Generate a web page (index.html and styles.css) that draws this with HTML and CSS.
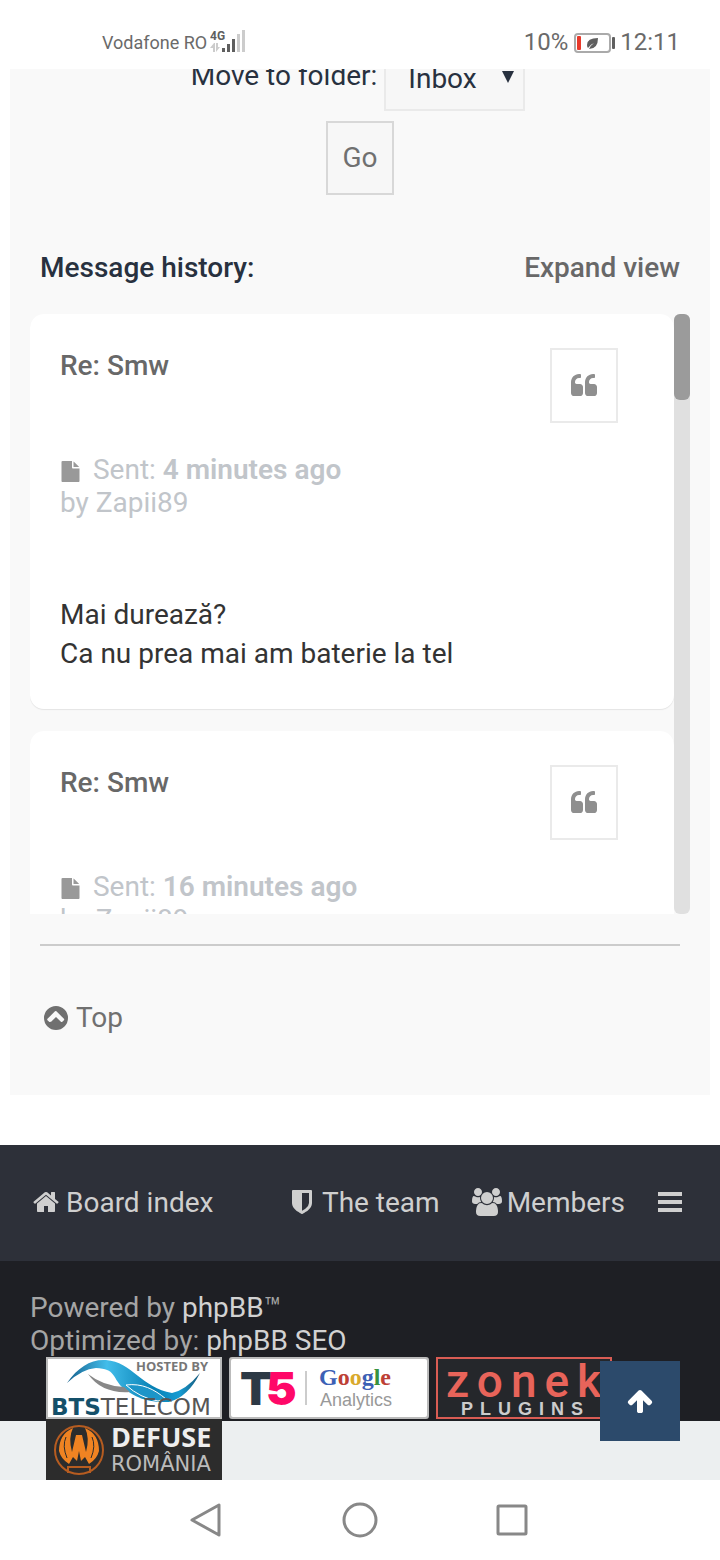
FILE: index.html
```html
<!DOCTYPE html>
<html lang="en">
<head>
    <meta charset="UTF-8">
    <meta name="viewport" content="width=device-width, initial-scale=1.0">
    <title>Message history</title>
    <link rel="stylesheet" href="styles.css">
</head>
<body>
<!-- Icons -->
<svg class="sprite" aria-hidden="true">
    <symbol id="quote" viewBox="0 0 1792 1792">
        <path id="quote-mark" d="M832 960v384q0 80-56 136t-136 56h-384q-80 0-136-56t-56-136v-704q0-104 40.5-198.5t109.5-163.5 163.5-109.5 198.5-40.5h64q26 0 45 19t19 45v128q0 26-19 45t-45 19h-64q-106 0-181 75t-75 181v32q0 40 28 68t68 28h224q80 0 136 56t56 136z"/>
        <use href="#quote-mark" x="896"/>
    </symbol>
    <symbol id="file" viewBox="0 0 1792 1792">
        <path d="M1152 512v-472q22 14 36 28l408 408q14 14 28 36h-472zm-128 32q0 40 28 68t68 28h544v1056q0 40-28 68t-68 28h-1344q-40 0-68-28t-28-68v-1600q0-40 28-68t68-28h800v544z"/>
    </symbol>
</svg>

<div class="status-bar">
    <span class="carrier">Vodafone RO</span>
    <svg class="signal" width="36" height="24" viewBox="0 0 36 24">
        <text x="0" y="11" class="signal-type">4G</text>
        <path fill="#ccc" d="M4 14l-4 5h3v4h2v-9zM6 14h2v4h2l-4 5z"/>
        <path fill="#5f5f5f" d="M12 19h3v4h-3zM17 15h3v8h-3zM22 10h3v13h-3z"/>
        <path fill="#ccc" d="M27 5h3v18h-3zM32 1h3v22h-3z"/>
    </svg>
    <span class="battery-level">10%</span>
    <svg width="42" height="20" viewBox="0 0 42 20">
        <rect x="1" y="1" width="35" height="18" rx="3" fill="none" stroke="#aaa" stroke-width="2"/>
        <rect x="3" y="3" width="4" height="14" rx="1" fill="#e8392b"/>
        <path fill="#5f5f5f" d="M24 5q-11 0-11 7 0 2 1 3 3-4 6-5-3 2-5 6 9 0 9-11z"/>
        <rect x="38" y="4" width="3" height="12" rx="1" fill="#5f5f5f"/>
    </svg>
    <span class="clock">12:11</span>
</div>

<div class="page">
    <div class="panel">
        <form class="move-form">
            <div class="move-row">
                <label for="folder">Move to folder:</label>
                <div class="select-wrap">
                    <select id="folder">
                        <option>Inbox</option>
                    </select>
                    <svg class="arrow" width="12" height="12" viewBox="0 0 12 12"><path d="M0 0h12L6 12z"/></svg>
                </div>
            </div>
            <button type="button" class="btn go-btn">Go</button>
        </form>

        <div class="history-head">
            <h3>Message history:</h3>
            <a href="#" class="expand">Expand view</a>
        </div>

        <!-- Message history -->
        <div class="history">
            <div class="posts">
                <div class="post">
                    <div class="post-head">
                        <h3><a href="#">Re: Smw</a></h3>
                        <button type="button" class="btn quote-btn" aria-label="Quote"><svg class="icon"><use href="#quote"/></svg></button>
                    </div>
                    <p class="author">
                        <svg class="icon-file"><use href="#file"/></svg> Sent: <strong>4 minutes ago</strong><br>by Zapii89
                    </p>
                    <div class="content">Mai durează?<br>Ca nu prea mai am baterie la tel</div>
                </div>
                <div class="post">
                    <div class="post-head">
                        <h3><a href="#">Re: Smw</a></h3>
                        <button type="button" class="btn quote-btn" aria-label="Quote"><svg class="icon"><use href="#quote"/></svg></button>
                    </div>
                    <p class="author">
                        <svg class="icon-file"><use href="#file"/></svg> Sent: <strong>16 minutes ago</strong><br>by Zapii89
                    </p>
                </div>
            </div>
            <div class="track"><div class="thumb"></div></div>
        </div>

        <hr>
        <a href="#" class="top-link">
            <svg class="icon" viewBox="0 0 1792 1792"><path fill-rule="evenodd" d="M128 896a768 768 0 1 0 1536 0a768 768 0 1 0-1536 0zM582 1139l314-314 314 314q19 19 45 19t45-19l102-102q19-19 19-45t-19-45l-480-480q-19-19-45-19t-45 19l-480 480q-19 19-19 45t19 45l102 102q19 19 45 19t45-19z"/></svg>
            Top
        </a>
    </div>

    <!-- Footer -->
    <div class="footer-nav">
        <a href="#" class="home">
            <svg class="icon" viewBox="0 0 1792 1792"><path d="M1472 992v480q0 26-19 45t-45 19h-384v-384h-256v384h-384q-26 0-45-19t-19-45v-480q0-1 .5-3t.5-3l575-474 575 474q1 2 1 6zm223-69l-62 74q-8 9-21 11h-3q-13 0-21-7l-692-577-692 577q-12 8-24 7-13-2-21-11l-62-74q-8-10-7-23.5t11-21.5l719-599q32-26 76-26t76 26l244 204v-195q0-14 9-23t23-9h192q14 0 23 9t9 23v408l219 182q10 8 11 21.5t-7 23.5z"/></svg>
            Board index
        </a>
        <a href="#">
            <svg class="icon" viewBox="0 0 1792 1792"><path d="M1344 960v-640h-448v1137q119-63 213-137 235-184 235-360zm192-768v768q0 86-33.5 170.5t-83 150-118 127.5-126.5 103-121 77.5-89.5 49.5-42.5 20q-12 6-26 6t-26-6q-16-7-42.5-20t-89.5-49.5-121-77.5-126.5-103-118-127.5-83-150-33.5-170.5v-768q0-26 19-45t45-19h1152q26 0 45 19t19 45z"/></svg>
            The team
        </a>
        <a href="#" class="members">
            <svg class="icon icon-wide" viewBox="0 0 1920 1792"><path d="M593 896q-162 5-265 128h-134q-82 0-138-40.5t-56-118.5q0-353 124-353 6 0 43.5 21t97.5 42.5 119 21.5q67 0 133-23-5 37-5 66 0 139 81 256zm1071 637q0 120-73 189.5t-194 69.5h-874q-121 0-194-69.5t-73-189.5q0-53 3.5-103.5t14-109 26.5-108.5 43-97.5 62-81 85.5-53.5 111.5-20q10 0 43 21.5t73 48 107 48 135 21.5 135-21.5 107-48 73-48 43-21.5q61 0 111.5 20t85.5 53.5 62 81 43 97.5 26.5 108.5 14 109 3.5 103.5zm-1024-1277q0 106-75 181t-181 75-181-75-75-181 75-181 181-75 181 75 75 181zm704 384q0 159-112.5 271.5t-271.5 112.5-271.5-112.5-112.5-271.5 112.5-271.5 271.5-112.5 271.5 112.5 112.5 271.5zm576 225q0 78-56 118.5t-138 40.5h-134q-103-123-265-128 81-117 81-256 0-29-5-66 66 23 133 23 59 0 119-21.5t97.5-42.5 43.5-21q124 0 124 353zm-128-609q0 106-75 181t-181 75-181-75-75-181 75-181 181-75 181 75 75 181z"/></svg>
            Members
        </a>
        <button type="button" class="menu-btn" aria-label="Menu">
            <svg width="24" height="20" viewBox="0 0 24 20"><path d="M0 0h24v4H0zM0 8h24v4H0zM0 16h24v4H0z"/></svg>
        </button>
    </div>

    <div class="copyright">
        Powered by <a href="#">phpBB</a>™<br>
        Optimized by: <a href="#">phpBB SEO</a>
        <div class="badges">
            <a href="#" aria-label="Hosted by BTS Telecom">
                <svg width="176" height="62" viewBox="0 0 176 62">
                    <defs>
                        <linearGradient id="wave" x1="0" x2="1">
                            <stop offset="0" stop-color="#17628f"/>
                            <stop offset="0.3" stop-color="#42bdea"/>
                            <stop offset="0.65" stop-color="#0781b5"/>
                            <stop offset="0.85" stop-color="#159bd2"/>
                            <stop offset="1" stop-color="#185777"/>
                        </linearGradient>
                    </defs>
                    <rect x="1" y="1" width="174" height="60" fill="#fff" stroke="#bbb" stroke-width="2"/>
                    <path fill="url(#wave)" d="M21 26C32 10 45 2 60 3c26 2 36 28 66 33q14-3 28-20-12 24-31 29C98 46 86 38 76 30 66 20 70 12 50 11Q36 12 21 26z"/>
                    <path fill="#1c95c8" stroke="#fff" d="M80 28c16-2 28 4 40 14l-8 2q-18-3-32-16z"/>
                    <path fill="#888" d="M42 17q15 12 36 13l6 5Q56 37 42 17z"/>
                    <text x="90" y="14" class="bts-host">HOSTED BY</text>
                    <text x="5" y="58" class="bts-name"><tspan class="bts-bold">BTS</tspan>TELECOM</text>
                </svg>
            </a>
            <a href="#" aria-label="T5 Google Analytics">
                <svg width="200" height="62" viewBox="0 0 200 62">
                    <rect width="200" height="62" rx="3" fill="#bbb"/>
                    <rect x="2" y="2" width="196" height="58" rx="2" fill="#fff"/>
                    <text x="11" y="48" class="t5">T</text>
                    <text x="37" y="48" class="t5 pink">5</text>
                    <path stroke="#ccc" stroke-width="2" d="M77 14v34"/>
                    <text x="90" y="28" class="google"><tspan fill="#3c60b5">G</tspan><tspan fill="#bd4035">o</tspan><tspan fill="#d9a92c">o</tspan><tspan fill="#3c60b5">g</tspan><tspan fill="#39923e">l</tspan><tspan fill="#bd4035">e</tspan></text>
                    <text x="91" y="49" class="analytics">Analytics</text>
                </svg>
            </a>
            <a href="#" aria-label="Zonek plugins">
                <svg width="176" height="62" viewBox="0 0 176 62">
                    <rect x="1" y="1" width="174" height="60" fill="#25272b" stroke="#d95c54" stroke-width="2"/>
                    <text x="10" y="40" class="zonek">zonek</text>
                    <text x="25" y="58" class="plugins">PLUGINS</text>
                </svg>
            </a>
        </div>
        <div class="badges overhang">
            <a href="#" aria-label="Defuse Romania">
                <svg width="176" height="62" viewBox="0 0 176 62">
                    <rect width="176" height="62" fill="#2c2c2c"/>
                    <circle cx="33" cy="31" r="24" fill="none" stroke="#b65c20" stroke-width="2"/>
                    <path fill="#f08322" d="M27 9Q13 15 13 32q2 8 10 13l4-7 4 4 2-10 2 10 4-4 4 7q8-5 10-13Q53 15 39 9q5 10 1 24l-4-17h-6l-4 17q-4-14 1-24z"/>
                    <path stroke="#2c2c2c" stroke-width="1" fill="none" d="M20 18q-4 9 1 21M46 18q4 9-1 21"/>
                    <path stroke="#b65c20" stroke-width="2" fill="none" d="M22 54v-6h22v6"/>
                    <text x="65" y="28" class="defuse">DEFUSE</text>
                    <text x="65" y="52" class="romania">ROMÂNIA</text>
                </svg>
            </a>
        </div>
    </div>
    <button type="button" class="to-top" aria-label="Back to top">
        <svg class="icon" viewBox="0 0 1792 1792"><path d="M1675 971q0 51-37 90l-75 75q-38 38-91 38-54 0-90-38l-294-293v704q0 52-37.5 84.5t-90.5 32.5h-128q-53 0-90.5-32.5t-37.5-84.5v-704l-294 293q-36 38-90 38t-90-38l-75-75q-38-38-38-90 0-53 38-91l651-651q35-37 90-37 54 0 91 37l651 651q37 39 37 91z"/></svg>
    </button>
</div>

<div class="system-nav">
    <button type="button" aria-label="Back"><svg width="36" height="36" viewBox="0 0 36 36"><path d="M29 3v30L2 18z"/></svg></button>
    <button type="button" aria-label="Home"><svg width="36" height="36" viewBox="0 0 36 36"><circle cx="18" cy="18" r="16"/></svg></button>
    <button type="button" aria-label="Recent apps"><svg width="36" height="36" viewBox="0 0 36 36"><rect x="4" y="4" width="28" height="28" rx="1"/></svg></button>
</div>
</body>
</html>
```
FILE: styles.css
```css
* {
    box-sizing: border-box;
}

body {
    font-family: Roboto, 'Liberation Sans', sans-serif;
    font-size: 28px;
    line-height: 33px;
    color: #28313f;
    background-color: #fff;
    margin: 0;
    height: 100vh;
    display: flex;
    flex-direction: column;
}

a {
    color: inherit;
    text-decoration: none;
}

h3 {
    font-size: 28px;
    font-weight: 500;
    margin: 0;
}

button,
select {
    font: inherit;
    color: inherit;
    cursor: pointer;
}

svg {
    display: block;
    fill: currentColor;
    flex-shrink: 0;
}

.sprite {
    display: none;
}

.icon {
    width: 28px;
    height: 28px;
}

.icon-wide {
    width: 30px;
}

/* Status bar */
.status-bar {
    display: flex;
    align-items: center;
    height: 69px;
    padding: 16px 40px 0 102px;
    font-size: 24px;
    color: #6a6a6a;
    flex-shrink: 0;
}

.carrier {
    font-size: 18px;
    margin-right: 3px;
}

.signal {
    align-self: flex-start;
    margin-top: 13px;
}

.signal-type {
    font-size: 12px;
    font-weight: 700;
    fill: #5f5f5f;
}

.battery-level {
    margin: 0 6px 0 auto;
}

.clock {
    margin-left: 4px;
}

/* Page */
.page {
    position: relative;
    flex: 1;
    min-height: 0;
    overflow: hidden;
    background-color: #eceff0;
}

.panel {
    background-color: #f9f9f9;
    border: solid #fff;
    border-width: 0 10px 50px;
    padding: 0 20px 61px;
}

.move-form {
    display: flex;
    flex-direction: column;
    align-items: center;
    gap: 10px;
    margin-top: -22px;
}

.move-row {
    display: flex;
    gap: 7px;
    line-height: 58px;
    padding-right: 4px;
}

.select-wrap {
    position: relative;
}

select {
    display: block;
    appearance: none;
    width: 141px;
    height: 64px;
    padding: 0 22px;
    border: 2px solid #eaeaea;
    border-radius: 0;
    background-color: #f7f7f7;
}

.arrow {
    position: absolute;
    right: 11px;
    top: 24px;
    pointer-events: none;
}

.btn {
    display: flex;
    align-items: center;
    justify-content: center;
    width: 68px;
    height: 74px;
    padding: 0;
    border: 2px solid #d8d8d8;
    background-color: #f7f7f7;
    color: #707070;
}

.go-btn {
    padding-bottom: 2px;
}

.history-head {
    display: flex;
    justify-content: space-between;
    margin: 56px 10px 30px;
}

.expand {
    font-weight: 500;
    color: #686868;
}

.history {
    display: flex;
    height: 600px;
}

.posts {
    flex: 1;
    overflow: hidden;
}

.track {
    width: 16px;
    border-radius: 6px;
    background-color: #e0e0e0;
}

.thumb {
    height: 86px;
    border-radius: 6px;
    background-color: #9b9b9b;
}

.post {
    background-color: #fff;
    border-radius: 14px;
    box-shadow: 0 1px 1px #e4e4e4;
    padding: 34px 30px 36px;
    margin-bottom: 22px;
}

.post-head {
    display: flex;
    justify-content: space-between;
    padding-right: 26px;
    line-height: 35px;
    color: #686868;
}

.quote-btn {
    height: 75px;
    border-color: #eaeaea;
    background-color: #fff;
    color: #8f8f8f;
}

.author {
    margin: 30px 0 76px;
    color: #c1c5ca;
}

.author strong {
    font-weight: 600;
}

.icon-file {
    display: inline-block;
    width: 21px;
    height: 21px;
    margin-right: 5px;
    vertical-align: -3px;
    color: #999;
}

.content {
    line-height: 39px;
    color: #333;
}

hr {
    height: 2px;
    margin: 30px 10px 55px;
    border: none;
    background-color: #ccc;
}

.top-link {
    display: flex;
    align-items: center;
    gap: 6px;
    margin-left: 12px;
    color: #707070;
}

/* Footer */
.footer-nav {
    display: flex;
    align-items: center;
    gap: 32px;
    height: 116px;
    padding: 0 38px 2px 32px;
    background-color: #2d3039;
    color: #cfcfcf;
}

.footer-nav a {
    display: flex;
    align-items: center;
    gap: 6px;
}

.footer-nav .home {
    margin-right: auto;
}

.footer-nav .members {
    gap: 5px;
    padding-right: 1px;
}

.menu-btn {
    padding: 0;
    border: none;
    background: none;
}

.copyright {
    padding: 30px 30px 2px;
    background-color: #1e1f24;
    color: #a5a5a5;
}

.copyright a {
    color: #d2d2d2;
}

.badges {
    display: flex;
    gap: 7px;
    padding-left: 16px;
}

/* last row of badges hangs over the end of the footer */
.overhang {
    margin-bottom: -62px;
}

.bts-host {
    font: 700 13px 'Open Sans', sans-serif;
    fill: #777;
}

.bts-name {
    font: 23px 'DejaVu Sans', sans-serif;
    fill: #555;
}

.bts-bold {
    font-weight: 700;
    fill: #14506a;
}

.t5 {
    font: 900 46px Inter, sans-serif;
    fill: #2d3945;
}

.t5.pink {
    fill: #ff0868;
}

.google {
    font: 700 24px 'Liberation Serif', serif;
}

.analytics {
    font: 18px 'Liberation Sans', sans-serif;
    fill: #999;
}

.zonek {
    font: 500 46px Roboto, sans-serif;
    letter-spacing: 8px;
    fill: #e8645a;
}

.plugins {
    font: 700 18px 'Liberation Sans', sans-serif;
    letter-spacing: 7px;
    fill: #ccc;
}

.defuse {
    font: 700 27px 'Open Sans', sans-serif;
    fill: #eee;
}

.romania {
    font: 21px 'DejaVu Sans', sans-serif;
    fill: #bbb;
}

.to-top {
    position: absolute;
    right: 40px;
    bottom: 39px;
    display: flex;
    align-items: center;
    justify-content: center;
    width: 80px;
    height: 80px;
    padding: 0;
    border: none;
    background-color: #2c4a6b;
    color: #fff;
}

/* System navigation */
.system-nav {
    display: flex;
    align-items: center;
    justify-content: center;
    gap: 116px;
    height: 80px;
    flex-shrink: 0;
}

.system-nav button {
    padding: 0;
    border: none;
    background: none;
    color: #888;
}

.system-nav svg {
    fill: none;
    stroke: currentColor;
    stroke-width: 3px;
    stroke-linejoin: round;
}
```
